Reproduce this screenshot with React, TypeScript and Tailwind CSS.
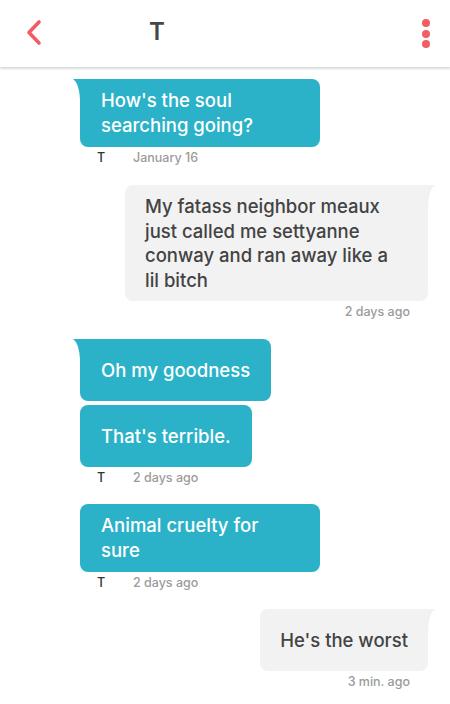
import React from "react";

const TEAL = "#2bb2c8";
const GRAY = "#f2f2f2";

function TailLeft() {
  return (
    <svg className="absolute left-[-7px] top-0" width="9" height="20" viewBox="0 0 9 20">
      <path d="M9 0 H0 Q6 4 7 20 H9 Z" fill={TEAL} />
    </svg>
  );
}
function TailRight() {
  return (
    <svg className="absolute right-[-7px] top-0" width="9" height="20" viewBox="0 0 9 20">
      <path d="M0 0 H9 Q3 4 2 20 H0 Z" fill={GRAY} />
    </svg>
  );
}

function Incoming({ children, tail, className = "" }: { children: React.ReactNode; tail?: boolean; className?: string }) {
  return (
    <div
      className={`relative bg-[#2bb2c8] text-white rounded-lg ${tail ? "rounded-tl-none" : ""} px-[21px] py-[9px] min-h-[62px] flex items-center text-[18.5px] leading-[25px] font-medium ${className}`}
    >
      {tail && <TailLeft />}
      <div>{children}</div>
    </div>
  );
}

function Outgoing({ children, tail, className = "" }: { children: React.ReactNode; tail?: boolean; className?: string }) {
  return (
    <div
      className={`relative bg-[#f2f2f2] text-[#434343] rounded-lg ${tail ? "rounded-tr-none" : ""} px-[20px] py-[9px] min-h-[62px] flex items-center text-[18.5px] leading-[24.5px] font-medium ${className}`}
    >
      {tail && <TailRight />}
      <div>{children}</div>
    </div>
  );
}

function MetaLeft({ time }: { time: string }) {
  return (
    <div className="h-[22px] flex items-center pl-[17px] text-[12.5px] font-medium">
      <span className="text-[#333] w-[36px]">T</span>
      <span className="text-[#9b9b9b]">{time}</span>
    </div>
  );
}

function MetaRight({ time }: { time: string }) {
  return (
    <div className="h-[22px] flex items-center justify-end pr-[18px] text-[12.5px] font-medium text-[#9b9b9b]">
      {time}
    </div>
  );
}

export default function App() {
  return (
    <div className="w-[450px] h-[704px] bg-white overflow-hidden" style={{ fontFamily: "Inter, Lato, sans-serif" }}>
      <header className="relative h-[67px] flex items-center shadow-[0_2px_2px_rgba(0,0,0,0.15)] bg-white z-10">
        <svg className="absolute left-[24px] top-[19px]" width="20" height="27" viewBox="0 0 20 27">
          <path d="M15 3 L5 13.5 L15 24" fill="none" stroke="#f25c62" strokeWidth="3.6" strokeLinecap="round" strokeLinejoin="round" />
        </svg>
        <div className="absolute left-[149px] top-[17px] text-[24px] leading-[30px] font-semibold text-[#474747]">T</div>
        <div className="absolute right-[20px] top-[19px] flex flex-col gap-[2.5px]">
          <span className="w-[8px] h-[8px] rounded-full bg-[#f25c62]" />
          <span className="w-[8px] h-[8px] rounded-full bg-[#f25c62]" />
          <span className="w-[8px] h-[8px] rounded-full bg-[#f25c62]" />
        </div>
      </header>

      <div className="flex flex-col pt-[12px]">
        <div className="flex flex-col items-start pl-[80px]">
          <Incoming tail className="w-[240px]">
            <span className="whitespace-nowrap">How's the soul</span>
            <br />
            <span className="whitespace-nowrap">searching going?</span>
          </Incoming>
        </div>
        <div className="pl-[80px]">
          <MetaLeft time="January 16" />
        </div>

        <div className="mt-[16px] flex flex-col items-end pr-[22px]">
          <Outgoing tail className="w-[303px]">
            <span className="whitespace-nowrap">My fatass neighbor meaux</span>
            <br />
            <span className="whitespace-nowrap">just called me settyanne</span>
            <br />
            <span className="whitespace-nowrap">conway and ran away like a</span>
            <br />
            <span className="whitespace-nowrap">lil bitch</span>
          </Outgoing>
          <div className="w-full">
            <MetaRight time="2 days ago" />
          </div>
        </div>

        <div className="mt-[16px] flex flex-col items-start gap-[4px] pl-[80px]">
          <Incoming tail>
            <span className="whitespace-nowrap">Oh my goodness</span>
          </Incoming>
          <Incoming>
            <span className="whitespace-nowrap">That's terrible.</span>
          </Incoming>
        </div>
        <div className="pl-[80px]">
          <MetaLeft time="2 days ago" />
        </div>

        <div className="mt-[15px] flex flex-col items-start pl-[80px]">
          <Incoming className="w-[240px]">
            <span className="whitespace-nowrap">Animal cruelty for</span>
            <br />
            <span className="whitespace-nowrap">sure</span>
          </Incoming>
        </div>
        <div className="pl-[80px]">
          <MetaLeft time="2 days ago" />
        </div>

        <div className="mt-[15px] flex flex-col items-end pr-[22px]">
          <Outgoing tail>
            <span className="whitespace-nowrap">He's the worst</span>
          </Outgoing>
          <div className="w-full">
            <MetaRight time="3 min. ago" />
          </div>
        </div>
      </div>
    </div>
  );
}
